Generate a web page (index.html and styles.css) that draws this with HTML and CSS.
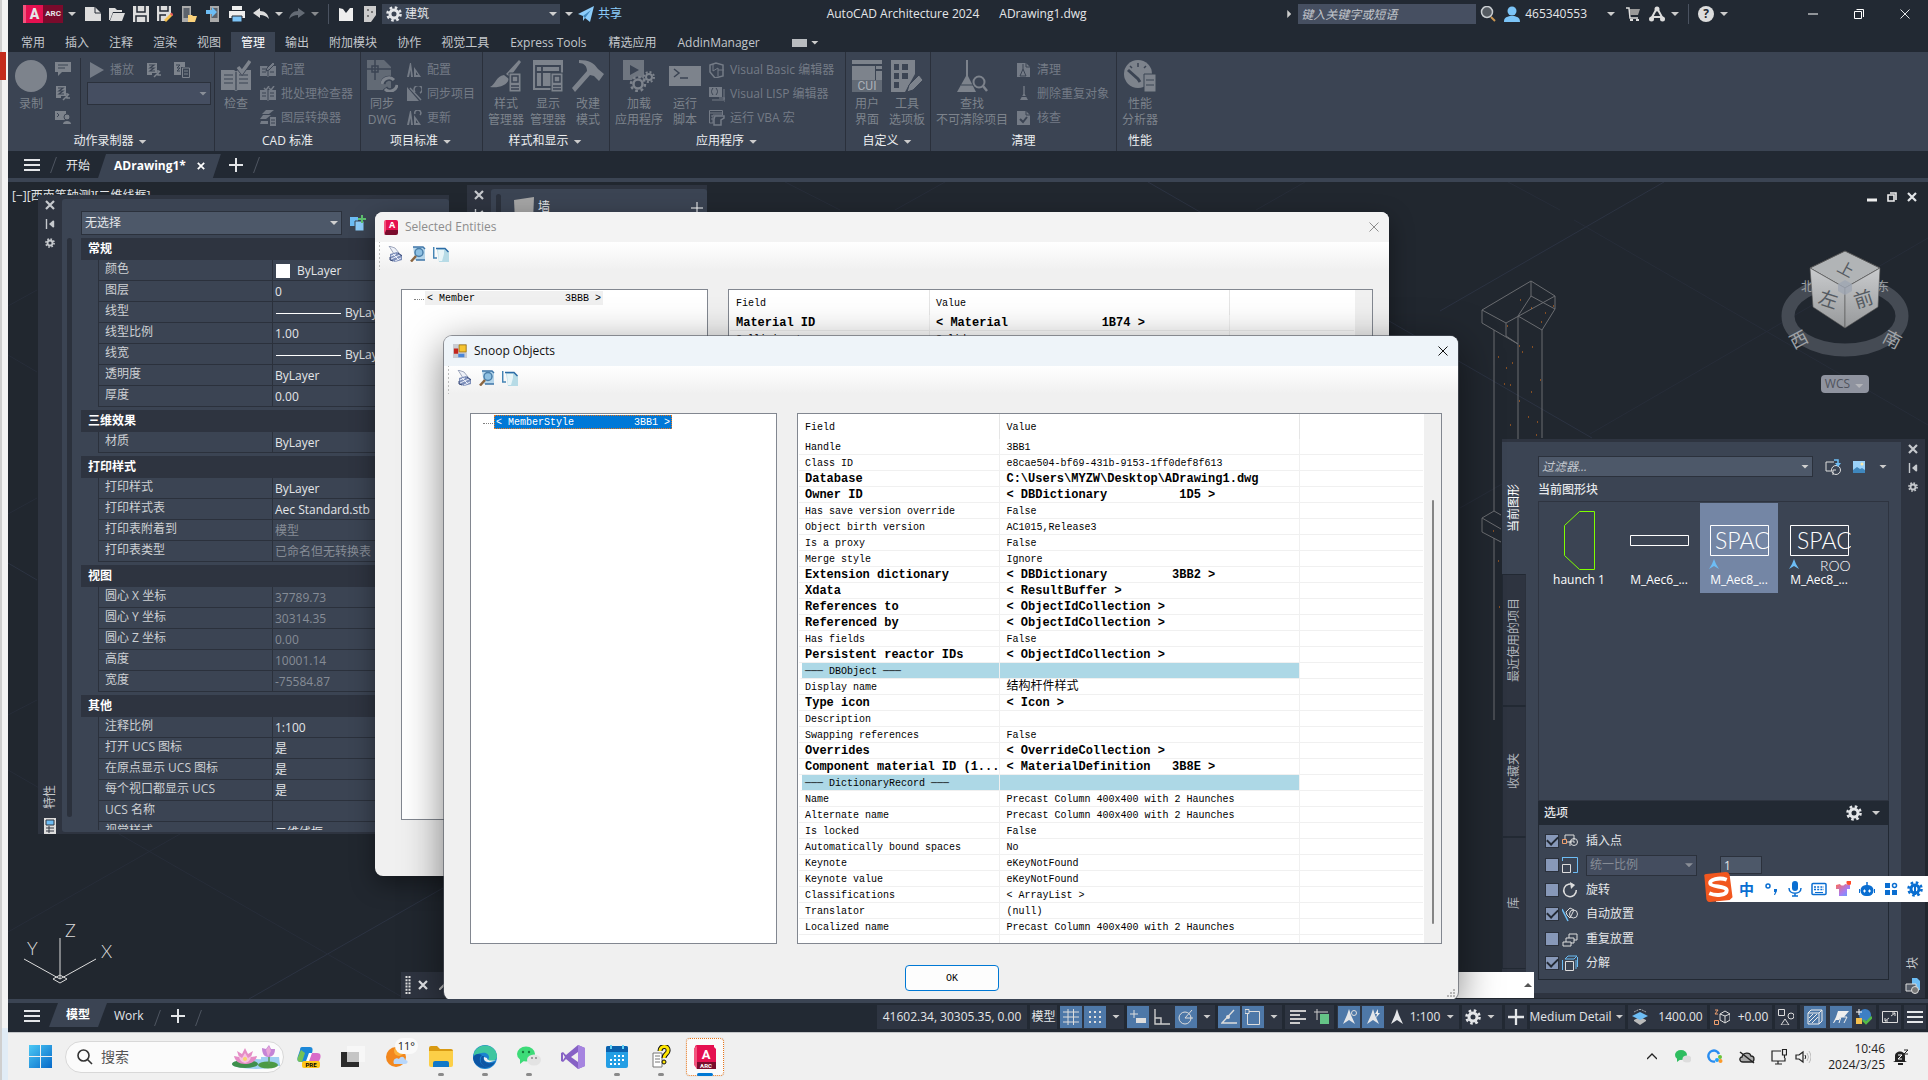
FILE: index.html
```
<!DOCTYPE html>
<html lang="zh-CN">
<head>
    <meta charset="UTF-8">
    <meta name="viewport" content="width=device-width, initial-scale=1.0">
    <title>AutoCAD Architecture 2024 - ADrawing1.dwg</title>
    <link rel="stylesheet" href="styles.css">
</head>
<body>
    <!-- Shared icons -->
    <svg class="sprite" aria-hidden="true">
        <symbol id="i-gear" viewBox="0 0 16 16"><g fill="none" stroke="currentColor"><circle cx="8" cy="8" r="4" stroke-width="3"/><circle cx="8" cy="8" r="6.5" stroke-width="2.6" stroke-dasharray="2.55 2.55"/></g></symbol>
        <symbol id="i-close" viewBox="0 0 10 10"><path d="M1 1L9 9M9 1L1 9" stroke="currentColor" stroke-width="2.2"/></symbol>
        <symbol id="i-thin-close" viewBox="0 0 10 10"><path d="M.5 .5L9.5 9.5M9.5 .5L.5 9.5" stroke="currentColor" stroke-width="1"/></symbol>
        <symbol id="i-pin" viewBox="0 0 10 10"><path d="M1.500 0V10M8.500 2V8" stroke="currentColor" stroke-width="1.4"/><path d="M8.500 1V9L4 5z" fill="currentColor"/></symbol>
        <symbol id="i-menu" viewBox="0 0 16 12"><path d="M0 1H16M0 6H16M0 11H16" stroke="currentColor" stroke-width="2"/></symbol>
        <symbol id="i-plus" viewBox="0 0 14 14"><path d="M7 0V14M0 7H14" stroke="currentColor" stroke-width="2"/></symbol>
        <symbol id="i-book" viewBox="0 0 30 32"><path d="M0 10H13L15 11.500L17 10H30V30H17L15 31L13 30H0z" fill="currentColor"/><path d="M15 12V30M3 15H12M3 19H12M3 23H12M18 15H27M18 19H27M18 23H27" stroke="#3b4453" stroke-width="1.2"/><path d="M17 7L21 12L29 1" fill="none" stroke="#3b4453" stroke-width="5"/><path d="M17 7L21 12L29 1" fill="none" stroke="currentColor" stroke-width="3.500"/></symbol>
        <symbol id="i-scroll" viewBox="0 0 16 16"><path d="M1 1H11V11H6V13H1z" fill="currentColor"/><path d="M3 3H8L4 6H8L4 9H9" fill="none" stroke="#3b4453" stroke-width="1.2"/><path d="M8 15L14 9M12 8V13H15" fill="none" stroke="currentColor" stroke-width="1.500"/></symbol>
        <symbol id="i-compass" viewBox="0 0 16 16"><path d="M4 1H5L7 15H5L4.500 8L3 15H1z" fill="currentColor"/><path d="M8 5L15 15H8z" fill="currentColor"/><path d="M10 10L12 13H10z" fill="#3b4453"/></symbol>
        <symbol id="i-page" viewBox="0 0 16 16"><path d="M1 1H10L14 5V15H1z" fill="currentColor"/><path d="M10 1V5H14" fill="none" stroke="#3b4453"/></symbol>
        <symbol id="i-broom" viewBox="0 0 16 16"><path d="M7.300 0H8.700V8L12 14H4L7.300 8z" fill="currentColor"/><path d="M5 10.500H11" stroke="#3b4453"/></symbol>
        <symbol id="i-nav" viewBox="0 0 16 16"><path d="M8 0L10 6L14 15L8 11L2 15L6 6z" fill="currentColor"/></symbol>
        <symbol id="i-print" viewBox="0 0 16 16"><path d="M2 0L8 2L12 7L7 8z" fill="#eef1f8" stroke="#7b87a3" stroke-width=".7"/><path d="M3 8L10 6L15 9V14L8 16L3 14z" fill="#7f90ba"/><path d="M4 10L9 8M4 13L13 9M8 15L14 12M6 8L12 14" stroke="#e9eefa"/><path d="M3 11V14L6 15M11 7L15 10" fill="none" stroke="#3a4b78"/></symbol>
        <symbol id="i-preview" viewBox="0 0 16 16"><path d="M3 1H13L15 3V14H5z" fill="#b5d5ea"/><path d="M3 1H13L15 3M15 14H6" fill="none" stroke="#3f76a8" stroke-width="1.500"/><circle cx="9" cy="6.500" r="4" fill="#8ec0e2" stroke="#4b7faa" stroke-width="1.500"/><path d="M6 10L1 15.500" stroke="#8a6540" stroke-width="2.500"/></symbol>
        <symbol id="i-copy" viewBox="0 0 16 16"><path d="M.7 1V12H4" fill="none" stroke="#4585b5" stroke-width="1.500"/><path d="M4 3H12L16 6V16H6z" fill="#b7dbe6"/><path d="M5 4H11V8L9 15H6z" fill="#e8f5f8"/><path d="M3 2.500H12L15.500 6" fill="none" stroke="#2c6ca6" stroke-width="1.500"/></symbol>
    </svg>

    <div class="desktop">
        <div class="behind"><span class="behind-red"></span></div>

        <div class="app">
            <header class="titlebar">
                <div class="title-left">
                    <button class="app-logo" aria-label="ACA"><b>A</b><span>ARC</span></button>
                    <i class="caret wide"></i>
                    <button class="tool"><svg viewBox="0 0 16 16"><path d="M0 1H10L16 7V15H0z" fill="#ddd"/><path d="M10 1V7H16" fill="none" stroke="#222933"/></svg></button>
                    <button class="tool"><svg viewBox="0 0 16 16"><path d="M0 2H6L8 4H13V6H4L1 14H0z" fill="#ddd"/><path d="M4 7H16L13 15H1z" fill="#ddd"/></svg></button>
                    <button class="tool"><svg viewBox="0 0 16 16"><path d="M0 0H16V16H0z" fill="#ddd"/><path d="M4 0V6H12V0M3 16V10H13V16" fill="none" stroke="#222933" stroke-width="1.500"/></svg></button>
                    <button class="tool"><svg viewBox="0 0 16 16"><path d="M0 0H14V8L8 15H0z" fill="#ddd"/><path d="M3 0V5H11V0M3 15V9H9" fill="none" stroke="#222933" stroke-width="1.500"/><path d="M7 14L14 7L16 9L9 16z" fill="#f4c04e"/><path d="M13 8L14.500 6.500L16.500 8.500L15 10z" fill="#e2565b"/></svg></button>
                    <button class="tool"><svg viewBox="0 0 16 16"><path d="M1 0H10V16H1z" fill="#aaa"/><path d="M2.500 2H8.500V12H2.500z" fill="#5d636c"/><path d="M7 9H11L12 10H16L14 16H7z" fill="#fbd27b"/></svg></button>
                    <button class="tool"><svg viewBox="0 0 16 16"><path d="M5 0H14V16H5z" fill="#aaa"/><path d="M6.500 2H12.500V12H6.500z" fill="#5d636c"/><path d="M1 4H7V1L12 6L7 11V8H1z" fill="#6dbdf5"/></svg></button>
                    <button class="tool"><svg viewBox="0 0 16 16"><path d="M3 0H13V4H3zM0 5H16V12H0z" fill="#eee"/><path d="M3 10H13V16H3z" fill="#7cc4f7" stroke="#222933"/></svg></button>
                    <button class="tool"><svg viewBox="0 0 16 16"><path d="M0 7L7 2V5C12 5 15 8 16 13C13 10 11 9 7 9V12z" fill="#ddd"/></svg></button>
                    <i class="caret"></i>
                    <button class="tool dim"><svg viewBox="0 0 16 16"><path d="M16 7L9 2V5C4 5 1 8 0 13C3 10 5 9 9 9V12z" fill="#646b75"/></svg></button>
                    <i class="caret dim"></i>
                    <span class="rule"></span>
                    <button class="tool"><svg viewBox="0 0 16 16"><path d="M1 2L5 3L8 7L12 2H15V15H1z" fill="#eee"/></svg></button>
                    <button class="tool"><svg viewBox="0 0 16 16"><path d="M2 0H14V9L9 16H2z" fill="#ccc"/><path d="M5 3H7V5H5zM9 5H11V7H9zM5 9H7V11H5z" fill="#777"/></svg></button>
                    <label class="combo workspace"><svg viewBox="0 0 16 16"><use href="#i-gear"/></svg><select aria-label="工作空间"><option>建筑</option></select></label>
                    <i class="caret wide"></i>
                    <button class="share"><svg viewBox="0 0 16 16"><path d="M16 0L12 16L7 12L5 15V10L0 8z" fill="#8ccdfb"/><path d="M5 10L13 4L7 12" fill="#3f87bd"/></svg>共享</button>
                </div>
                <div class="title-text"><span>AutoCAD Architecture 2024</span><span>ADrawing1.dwg</span></div>
                <div class="title-right">
                    <i class="caret side"></i>
                    <input class="search-box" type="search" placeholder="键入关键字或短语" aria-label="搜索">
                    <button class="tool"><svg viewBox="0 0 16 16"><circle cx="7" cy="6" r="5.500" fill="#555b62" stroke="#c9cdd1" stroke-width="1.500"/><path d="M11 11L15 15" stroke="#c99550" stroke-width="2"/></svg></button>
                    <button class="account"><svg viewBox="0 0 16 16"><circle cx="8" cy="5" r="4.500" fill="#7cc4f7"/><path d="M0 16C0 11 3 11 6 10H10C13 11 16 11 16 16z" fill="#7cc4f7"/></svg>465340553</button>
                    <i class="caret"></i>
                    <button class="tool cart"><svg viewBox="0 0 16 16"><path d="M1 2H4L5 12H13" fill="none" stroke="#ddd" stroke-width="1.500"/><path d="M5 3H15L13 9H5z" fill="#999"/><path d="M5 13H8V15H5zM11 13H14V15H11z" fill="#ddd"/></svg></button>
                    <button class="tool"><svg viewBox="0 0 16 16"><path d="M8 2L2 13M8 2L14 13M4 11H12" fill="none" stroke="#ddd" stroke-width="2"/><circle cx="8" cy="3" r="2.500" fill="#ddd"/><circle cx="2.500" cy="13" r="2.500" fill="#ddd"/><circle cx="13.500" cy="13" r="2.500" fill="#ddd"/></svg></button>
                    <i class="caret"></i>
                    <span class="rule"></span>
                    <button class="help">?</button>
                    <i class="caret"></i>
                    <div class="window-controls">
                        <button aria-label="最小化"><svg viewBox="0 0 10 10"><path d="M0 5H10" stroke="#fff"/></svg></button>
                        <button aria-label="还原"><svg viewBox="0 0 10 10"><path d="M.5 2.500H7.500V9.500H.5zM2.500 .5H9.500V8" fill="none" stroke="#fff"/></svg></button>
                        <button aria-label="关闭"><svg viewBox="0 0 10 10"><use href="#i-thin-close"/></svg></button>
                    </div>
                </div>
            </header>

            <nav class="ribbon-tabs">
                <button>常用</button><button>插入</button><button>注释</button><button>渲染</button><button>视图</button><button class="active">管理</button><button>输出</button><button>附加模块</button><button>协作</button><button>视觉工具</button><button class="latin">Express Tools</button><button>精选应用</button><button class="latin">AddinManager</button>
                <button class="ribbon-toggle" aria-label="最小化功能区"><span></span><i class="caret"></i></button>
            </nav>

            <section class="ribbon">
                <div class="panel panel-recorder">
                    <div class="panel-body">
                        <button class="big" disabled><svg viewBox="0 0 32 32"><circle cx="16" cy="16" r="16" fill="currentColor"/></svg>录制</button>
                        <div class="icon-stack">
                            <svg viewBox="0 0 16 16"><path d="M0 1H16V11H7L3 15V11H0z" fill="currentColor"/><path d="M3 4H13M3 7H10" stroke="#3b4453"/></svg>
                            <svg viewBox="0 0 16 16"><use href="#i-scroll"/></svg>
                            <svg viewBox="0 0 16 16"><path d="M0 2H11V11H0z" fill="currentColor"/><path d="M2 4L4 6L2 8" stroke="#3b4453" fill="none"/><circle cx="12" cy="8" r="3" fill="currentColor" stroke="#3b4453"/><path d="M8 15C8 11 16 11 16 15z" fill="currentColor"/></svg>
                        </div>
                        <div class="play-group">
                            <div class="play-row">
                                <button class="small" disabled><svg viewBox="0 0 16 16"><path d="M1 0L15 8L1 16z" fill="currentColor"/></svg>播放</button>
                                <svg viewBox="0 0 16 16"><use href="#i-scroll"/></svg>
                                <svg viewBox="0 0 16 16"><path d="M0 0H11V5H7V13H0z" fill="currentColor"/><path d="M2 3H6L3 6H6L3 9H6" fill="none" stroke="#3b4453"/><path d="M8.500 6H15.500V15.500H8.500zM10 9H14M10 12H14" fill="none" stroke="currentColor"/></svg>
                            </div>
                            <span class="combo macro"><select disabled aria-label="动作宏"><option></option></select></span>
                        </div>
                    </div>
                    <div class="panel-title">动作录制器 <i class="caret"></i></div>
                </div>
                <div class="panel panel-cad">
                    <div class="panel-body">
                        <button class="big" disabled><svg viewBox="0 0 30 32"><use href="#i-book"/></svg>检查</button>
                        <div class="small-stack">
                            <button class="small" disabled><svg viewBox="0 0 16 16"><path d="M0 4H7L8 5L9 4H16V14H9L8 15L7 14H0z" fill="currentColor"/><path d="M8 5V14M2 7H6M2 10H6M10 10H14" stroke="#3b4453"/><path d="M6 9L7 6L13 0L15 2L9 8z" fill="currentColor" stroke="#3b4453"/></svg>配置</button>
                            <button class="small" disabled><svg viewBox="0 0 16 16"><path d="M0 4H7L8 5L9 4H16V14H9L8 15L7 14H0z" fill="currentColor"/><path d="M8 5V14M2 7H6M2 10H6M10 7H14M10 10H14" stroke="#3b4453"/><path d="M4 2L6 4L9 0M9 2L11 4L14 0" fill="none" stroke="currentColor" stroke-width="1.500"/></svg>批处理检查器</button>
                            <button class="small" disabled><svg viewBox="0 0 16 16"><path d="M6 0H14L9 4H2zM3 5H11L6 9H0zM1 11H8V14H0z" fill="currentColor"/><path d="M10 7H16V16H10z" fill="currentColor"/><path d="M11 10H15M11 13H15" stroke="#3b4453"/></svg>图层转换器</button>
                        </div>
                    </div>
                    <div class="panel-title">CAD 标准</div>
                </div>
                <div class="panel panel-project">
                    <div class="panel-body">
                        <button class="big" disabled><svg viewBox="0 0 32 32"><path d="M1 0H18L25 7V30H1z" fill="currentColor" opacity=".6"/><path d="M1 9H25M9 0V20M6 6H12V12H6z" fill="none" stroke="#3b4453" stroke-width="1.500"/><path d="M17 24A6 6 0 0 1 28 21M30 25A6 6 0 0 1 19 28" fill="none" stroke="#3b4453" stroke-width="5"/><path d="M16 24A7 7 0 0 1 28 20M31 25A7 7 0 0 1 19 29" fill="none" stroke="currentColor" stroke-width="3"/></svg>同步<br>DWG</button>
                        <div class="small-stack">
                            <button class="small" disabled><svg viewBox="0 0 16 16"><use href="#i-compass"/></svg>配置</button>
                            <button class="small" disabled><svg viewBox="0 0 16 16"><path d="M1 1L13 15H1z" fill="currentColor"/><path d="M9 6A4 4 0 1 1 14 7M4 2L15 14" fill="none" stroke="currentColor" stroke-width="1.500"/></svg>同步项目</button>
                            <button class="small" disabled><svg viewBox="0 0 16 16"><use href="#i-compass"/><path d="M9 4A3 3 0 1 1 14 5" fill="none" stroke="currentColor" stroke-width="1.500"/></svg>更新</button>
                        </div>
                    </div>
                    <div class="panel-title">项目标准 <i class="caret"></i></div>
                </div>
                <div class="panel panel-style">
                    <div class="panel-body">
                        <button class="big" disabled><svg viewBox="0 0 32 32"><path d="M29 0L31 2L20 17L16 14z" fill="currentColor"/><path d="M14 15L19 19C17 26 8 28 0 27C6 24 6 16 14 15z" fill="currentColor"/><path d="M19 13H31V32H19z" fill="currentColor" stroke="#3b4453"/><path d="M22 16H28V22H22zM21 26H29M21 29H29" fill="none" stroke="#3b4453" stroke-width="1.500"/></svg>样式<br>管理器</button>
                        <button class="big" disabled><svg viewBox="0 0 32 32"><path d="M1 0H31V30H1z" fill="currentColor"/><path d="M4 6H28V27H4zM10 6V27M4 12H28" fill="none" stroke="#3b4453" stroke-width="1.800"/><path d="M19 13H31V32H19z" fill="currentColor" stroke="#3b4453"/><path d="M22 16H28V22H22zM21 26H29M21 29H29" fill="none" stroke="#3b4453" stroke-width="1.500"/></svg>显示<br>管理器</button>
                        <button class="big" disabled><svg viewBox="0 0 32 32"><path d="M7 0C17 0 22 3 26 9L32 14L27 21L22 16L18 15L3 32L0 28L15 11C15 6 12 3 7 3z" fill="currentColor"/></svg>改建<br>模式</button>
                    </div>
                    <div class="panel-title">样式和显示 <i class="caret"></i></div>
                </div>
                <div class="panel panel-apps">
                    <div class="panel-body">
                        <button class="big" disabled><svg viewBox="0 0 32 32"><path d="M0 0H21V20H0z" fill="currentColor" opacity=".8"/><path d="M7 5L16 10L7 15z" fill="#3b4453"/><circle cx="15" cy="24" r="7.500" fill="#3b4453"/><g fill="none" stroke="currentColor"><circle cx="15" cy="24" r="4.500" stroke-width="2.500"/><circle cx="15" cy="24" r="7" stroke-width="2.500" stroke-dasharray="2.750 2.750"/><circle cx="26" cy="17" r="3" stroke-width="2"/><circle cx="26" cy="17" r="5" stroke-width="2" stroke-dasharray="1.960 1.960"/></g></svg>加载<br>应用程序</button>
                        <button class="big" disabled><svg viewBox="0 0 32 32"><path d="M0 6H32V26H0z" fill="currentColor"/><path d="M5 9L10 13L5 17M11 18H19" fill="none" stroke="#3b4453" stroke-width="1.500"/></svg>运行<br>脚本</button>
                        <div class="small-stack">
                            <button class="small" disabled><svg viewBox="0 0 16 16"><path d="M1 3L7 1L14 3V14L6 16L1 10z" fill="none" stroke="currentColor" stroke-width="1.500"/><path d="M4 2V9L9 6V14M9 8H15" stroke="currentColor" fill="none"/></svg>Visual Basic 编辑器</button>
                            <button class="small" disabled><svg viewBox="0 0 16 16"><path d="M0 1H13V11H0z" fill="currentColor"/><path d="M4 2C2 5 2 6 4 9M7 2C9 5 9 6 7 9" fill="none" stroke="#3b4453"/><path d="M15 3V14H3M10 12H16V16" fill="none" stroke="currentColor"/></svg>Visual LISP 编辑器</button>
                            <button class="small" disabled><svg viewBox="0 0 16 16"><path d="M.5 .5H13.500V5H4V13H.5zM.5 3H13M2 6H4M2 9H4" fill="none" stroke="currentColor"/><path d="M6 6H15V8L12 10V15H5V9z" fill="none" stroke="currentColor" stroke-width="1.500"/></svg>运行 VBA 宏</button>
                        </div>
                    </div>
                    <div class="panel-title">应用程序 <i class="caret"></i></div>
                </div>
                <div class="panel panel-custom">
                    <div class="panel-body">
                        <button class="big" disabled><svg viewBox="0 0 32 32"><path d="M1 0H31V4H1zM1 6H24V20H1zM25 6H31V9H25zM25 11H31V20H25z" fill="currentColor"/><path d="M1 20H31V32H1z" fill="currentColor" opacity=".6"/><text x="16" y="30" text-anchor="middle" class="cui-text">CUI</text></svg>用户<br>界面</button>
                        <button class="big" disabled><svg viewBox="0 0 32 32"><path d="M0 0H24V14L14 32H0z" fill="currentColor"/><path d="M3 4H8V10H3zM11 4H17V10H11zM3 13H8V19H3zM11 13H17V19H11zM3 22H8V28H3z" fill="#3b4453"/><path d="M16 32L18 25L28 15L32 20L22 30z" fill="currentColor" stroke="#3b4453"/></svg>工具<br>选项板</button>
                    </div>
                    <div class="panel-title">自定义 <i class="caret"></i></div>
                </div>
                <div class="panel panel-purge">
                    <div class="panel-body">
                        <button class="big" disabled><svg viewBox="0 0 32 32"><path d="M10 0H12V16L20 32H1L10 16z" fill="currentColor"/><path d="M5 25H17" stroke="#3b4453"/><circle cx="23" cy="22" r="5.500" fill="#3b4453" stroke="currentColor" stroke-width="2"/><path d="M27 26L31 31" stroke="currentColor" stroke-width="2.500"/></svg>查找<br>不可清除项目</button>
                        <div class="small-stack">
                            <button class="small" disabled><svg viewBox="0 0 16 16"><use href="#i-page"/><path d="M7 2V7L4 14H10L7 7" fill="none" stroke="#3b4453"/></svg>清理</button>
                            <button class="small" disabled><svg viewBox="0 0 16 16"><use href="#i-broom"/></svg>删除重复对象</button>
                            <button class="small" disabled><svg viewBox="0 0 16 16"><use href="#i-page"/><path d="M4 9L7 12L11 7" fill="none" stroke="#3b4453" stroke-width="2"/></svg>核查</button>
                        </div>
                    </div>
                    <div class="panel-title">清理</div>
                </div>
                <div class="panel panel-perf">
                    <div class="panel-body">
                        <button class="big" disabled><svg viewBox="0 0 32 32"><circle cx="14" cy="14" r="14" fill="currentColor"/><path d="M4 10L14 19L16 22" stroke="#3b4453" stroke-width="3" fill="none"/><path d="M14 3V7M6 6L8 8M22 6L20 8" stroke="#3b4453" stroke-width="1.500"/><path d="M20 14H32V32H20z" fill="currentColor" stroke="#3b4453"/><path d="M22 20H30M22 25H30" stroke="#3b4453"/></svg>性能<br>分析器</button>
                    </div>
                    <div class="panel-title">性能</div>
                </div>
            </section>

            <nav class="file-tabs">
                <button class="menu" aria-label="菜单"><svg viewBox="0 0 16 12"><use href="#i-menu"/></svg></button>
                <span class="slash"></span>
                <button class="start">开始</button>
                <button class="file-active">ADrawing1* <svg viewBox="0 0 10 10"><use href="#i-close"/></svg></button>
                <button class="plus" aria-label="新建"><svg viewBox="0 0 14 14"><use href="#i-plus"/></svg></button>
                <span class="slash"></span>
            </nav>

            <main class="canvas">
                <svg class="scene" viewBox="8 182 1920 817" preserveAspectRatio="xMinYMin meet">
                    <g stroke="#2c3342" fill="none">
                        <path d="M1664 182L1440 311M1148 182L1592 438M443 888L249 999M8 563L37 580"/>
                        <path stroke="#272d39" d="M1574 220L1928 425M1928 238L1590 434M180 834L8 932M8 770L402 997M8 715L37 700M8 306L37 290M8 355L37 372M8 514L37 498M785 182L840 210M945 182L895 210M1305 182L1256 210M1508 182L1560 210M1460 508L1502 484"/>
                    </g>
                    <!-- Column wireframe -->
                    <g stroke="#6a6c70" fill="none">
                        <path d="M1482 310L1531 281L1555 296V309L1542 330L1518 316L1531 296V281M1482 310L1506 323V336L1518 344L1482 323zM1506 323L1555 296M1531 296L1555 309"/>
                        <path d="M1494 330V511M1518 316V442M1542 330V438M1494 511L1482 518V532L1501 542M1482 518L1501 529M1494 511L1501 515M1494 538V720"/>
                    </g>
                    <path d="M1520 300h1M1531 308h1M1545 313h1M1553 306h1M1541 322h1M1507 326h1M1519 346h1M1532 347h1M1522 352h1M1498 357h1M1512 363h1M1506 368h1M1504 384h1M1510 385h1M1540 380h1M1531 392h1M1519 401h1M1528 417h1M1537 422h1M1510 425h1M1536 435h1M1493 531h1M1498 561h1M1499 607h1" stroke="#e8761a"/>
                    <!-- UCS axes -->
                    <g stroke="#dcdcdc" fill="none"><path d="M60 938V979L24 959M60 979L96 959M53 979L60 975L67 979L60 983z"/></g>
                    <g class="axis-text"><text x="27" y="955">Y</text><text x="65" y="937">Z</text><text x="101" y="958">X</text></g>
                </svg>

                <!-- View cube -->
                <div class="viewcube">
                    <svg viewBox="1780 245 130 120">
                        <defs><linearGradient id="cube" x2="0" y2="1"><stop stop-color="#c9cbcd"/><stop offset="1" stop-color="#97999b"/></linearGradient></defs>
                        <ellipse cx="1845" cy="316" rx="57" ry="34" fill="none" stroke="#454b54" stroke-width="13"/>
                        <g class="compass-text"><text x="1801" y="291">北</text><text x="1877" y="291">东</text><text class="near" x="1790" y="346" transform="rotate(-28 1799 340)">西</text><text class="near" x="1883" y="346" transform="rotate(28 1892 340)">南</text></g>
                        <path d="M1845 251L1880 268L1845 288L1810 268z" fill="#b1b4b6" stroke="#555"/>
                        <path d="M1810 268L1845 288V328L1813 307z" fill="url(#cube)" stroke="#555" stroke-width=".6"/>
                        <path d="M1880 268L1845 288V328L1878 307z" fill="url(#cube)" stroke="#555" stroke-width=".6"/>
                        <path d="M1838 284L1845 280L1852 284V291L1845 295L1838 291z" fill="#9fa6b3" opacity=".8"/>
                        <g class="cube-text"><text x="1838" y="275" transform="rotate(28 1846 269)">上</text><text x="1819" y="306" transform="rotate(18 1828 299)" class="face">左</text><text x="1854" y="306" transform="rotate(-18 1863 299)" class="face">前</text></g>
                    </svg>
                    <button class="wcs">WCS <i class="caret"></i></button>
                </div>
                <div class="doc-controls">
                    <svg viewBox="0 0 10 10"><path d="M0 8H10" stroke="#eee" stroke-width="3"/></svg>
                    <svg viewBox="0 0 10 10"><path d="M1 3H7V9H1zM3 1H9V8" fill="none" stroke="#eee" stroke-width="1.600"/></svg>
                    <svg viewBox="0 0 10 10"><use href="#i-close"/></svg>
                </div>
                <div class="view-label">[−][西南等轴测][二维线框]</div>

                <!-- Properties palette -->
                <aside class="palette properties">
                    <div class="palette-bar">
                        <svg viewBox="0 0 10 10"><use href="#i-close"/></svg>
                        <svg viewBox="0 0 10 10"><use href="#i-pin"/></svg>
                        <svg viewBox="0 0 16 16"><use href="#i-gear"/></svg>
                        <span class="vertical">特性</span>
                        <svg class="palette-icon" viewBox="0 0 12 16"><path d="M0 0H12V16H0z" fill="#ddd"/><path d="M2 2H10V7H2z" fill="#6dbdf5" stroke="#2e3440"/><path d="M2 10H10M2 13H10M5 8V15" stroke="#2e3440"/></svg>
                    </div>
                    <div class="palette-body">
                        <span class="track"></span>
                        <div class="props">
                            <div class="props-head">
                                <span class="combo selection"><select aria-label="对象"><option>无选择</option></select></span>
                                <svg viewBox="0 0 16 16"><path d="M0 2H8V11H0z" fill="#6dbdf5"/><path d="M5 6H14V16H5z" fill="#8ccdfb" stroke="#3b4453"/><path d="M12 0V8M8 4H16" stroke="#5ec26f" stroke-width="2"/></svg>
                            </div>
                            <h3>常规</h3>
                            <table>
                                <tr><th>颜色</th><td><span class="swatch"></span>ByLayer</td></tr>
                                <tr><th>图层</th><td>0</td></tr>
                                <tr><th>线型</th><td><span class="line"></span>ByLayer</td></tr>
                                <tr><th>线型比例</th><td>1.00</td></tr>
                                <tr><th>线宽</th><td><span class="line"></span>ByLayer</td></tr>
                                <tr><th>透明度</th><td>ByLayer</td></tr>
                                <tr><th>厚度</th><td>0.00</td></tr>
                            </table>
                            <h3>三维效果</h3>
                            <table>
                                <tr><th>材质</th><td>ByLayer</td></tr>
                            </table>
                            <h3>打印样式</h3>
                            <table>
                                <tr><th>打印样式</th><td>ByLayer</td></tr>
                                <tr><th>打印样式表</th><td>Aec Standard.stb</td></tr>
                                <tr><th>打印表附着到</th><td class="off">模型</td></tr>
                                <tr><th>打印表类型</th><td class="off">已命名但无转换表</td></tr>
                            </table>
                            <h3>视图</h3>
                            <table>
                                <tr><th>圆心 X 坐标</th><td class="off">37789.73</td></tr>
                                <tr><th>圆心 Y 坐标</th><td class="off">30314.35</td></tr>
                                <tr><th>圆心 Z 坐标</th><td class="off">0.00</td></tr>
                                <tr><th>高度</th><td class="off">10001.14</td></tr>
                                <tr><th>宽度</th><td class="off">-75584.87</td></tr>
                            </table>
                            <h3>其他</h3>
                            <table>
                                <tr><th>注释比例</th><td>1:100</td></tr>
                                <tr><th>打开 UCS 图标</th><td>是</td></tr>
                                <tr><th>在原点显示 UCS 图标</th><td>是</td></tr>
                                <tr><th>每个视口都显示 UCS</th><td>是</td></tr>
                                <tr><th>UCS 名称</th><td></td></tr>
                                <tr><th>视觉样式</th><td>二维线框</td></tr>
                            </table>
                        </div>
                    </div>
                </aside>

                <!-- Tool palette -->
                <aside class="palette tools">
                    <div class="palette-bar">
                        <svg viewBox="0 0 10 10"><use href="#i-close"/></svg>
                        <svg viewBox="0 0 10 10"><use href="#i-pin"/></svg>
                    </div>
                    <div class="palette-body">
                        <span class="track"></span>
                        <div class="tool-item">
                            <svg viewBox="0 0 20 24"><path d="M0 3L20 0L19 24H1z" fill="#a5a5a5"/></svg><span>墙</span>
                            <svg class="cross" viewBox="0 0 12 12"><path d="M6 0V12M0 6H12" stroke="#fff"/></svg>
                        </div>
                    </div>
                </aside>

                <!-- Blocks palette -->
                <aside class="palette blocks">
                    <div class="block-tabs">
                        <button class="active"><span class="vertical">当前图形</span></button>
                        <button><span class="vertical">最近使用的项目</span></button>
                        <button><span class="vertical">收藏夹</span></button>
                        <button><span class="vertical">库</span></button>
                    </div>
                    <div class="block-body">
                        <div class="filter-row">
                            <span class="combo filter"><input type="text" placeholder="过滤器..." aria-label="过滤器"></span>
                            <svg viewBox="0 0 16 16"><path d="M9 3H1V12H6" fill="none" stroke="#ddd"/><circle cx="11" cy="11" r="4.500" fill="none" stroke="#ddd"/><path d="M8 16V11H11" fill="none" stroke="#ddd"/><path d="M9 1H13V5" fill="none" stroke="#6dbdf5" stroke-width="1.500"/><path d="M10 4H16L13 8z" fill="#6dbdf5"/></svg>
                            <svg viewBox="0 0 12 12"><path d="M0 0H12V12H0z" fill="#9ad2fa"/><circle cx="9" cy="3" r="1.500" fill="#fbe9a8"/><path d="M0 9L4 6L7 8L9 7L12 9V12H0z" fill="#3f87bd"/></svg>
                            <i class="caret"></i>
                        </div>
                        <h4>当前图形块</h4>
                        <div class="block-list">
                            <figure><svg viewBox="0 0 78 72"><path d="M39.500 8.500H54.500V66.500H39.500L24.500 52.500V22.500z" fill="none" stroke="#7fff00"/></svg><figcaption>haunch 1</figcaption></figure>
                            <figure><svg viewBox="0 0 78 72"><path d="M10.500 32.500H68.500V42.500H10.500z" fill="none" stroke="#fff"/></svg><figcaption>M_Aec6_...</figcaption></figure>
                            <figure class="selected"><svg viewBox="0 0 78 72"><path d="M10.500 22.500H68.500V52.500H10.500z" fill="none" stroke="#fff"/><svg width="61" height="72" x="10" y="0"><text class="cad-text" x="5" y="46">SPACE</text></svg><path d="M14 56L16 61L19 66L14 63L9 66L12 61z" fill="#6dbdf5"/></svg><figcaption>M_Aec8_...</figcaption></figure>
                            <figure><svg viewBox="0 0 78 72"><path d="M10.500 22.500H68.500V52.500H10.500z" fill="none" stroke="#fff"/><svg width="61" height="72" x="10" y="0"><text class="cad-text" x="7" y="46">SPACE</text><text class="cad-text cad-small" x="30" y="68">ROOM</text></svg><path d="M14 56L16 61L19 66L14 63L9 66L12 61z" fill="#6dbdf5"/></svg><figcaption>M_Aec8_...</figcaption></figure>
                        </div>
                        <div class="options-head">选项<svg viewBox="0 0 16 16"><use href="#i-gear"/></svg><i class="caret"></i></div>
                        <div class="options">
                            <label><input type="checkbox" checked><svg viewBox="0 0 16 16"><path d="M.5 6.500H4.500V10.500H.5z" fill="none" stroke="#f2a16f"/><path d="M3 6V2H12V7M5 9H10" fill="none" stroke="#ddd"/><circle cx="12" cy="9" r="3.500" fill="none" stroke="#ddd"/><path d="M8 13V8H12V10" fill="none" stroke="#ddd"/></svg>插入点</label>
                            <div class="option-row">
                                <input type="checkbox" aria-label="比例"><svg viewBox="0 0 16 16"><path d="M0 .5H15.500V15.500H11M.5 4V.5" fill="none" stroke="#6dbdf5"/><path d="M.5 7.500H8.500V15.500H.5z" fill="none" stroke="#ddd"/></svg>
                                <span class="combo scale"><select disabled aria-label="比例类型"><option>统一比例</option></select></span>
                                <input class="number" type="text" value="1" aria-label="比例值">
                            </div>
                            <label><input type="checkbox"><svg viewBox="0 0 16 16"><path d="M12 3.500A6.300 6.300 0 1 0 14.300 8" fill="none" stroke="#ddd" stroke-width="1.500"/><path d="M8 0L13 3L9 7z" fill="#ddd"/></svg>旋转</label>
                            <label><input type="checkbox" checked><svg viewBox="0 0 16 16"><path d="M0 3L6 15" stroke="#6dbdf5" stroke-width="1.500"/><path d="M4 6L8 2L12 4L8 12L5 9z" fill="none" stroke="#ddd"/><circle cx="11.500" cy="8" r="4" fill="none" stroke="#ddd"/></svg>自动放置</label>
                            <label><input type="checkbox"><svg viewBox="0 0 16 16"><path d="M1 11H9V15H1zM4 11V7H12V12H9M7 7V3H15V9H12" fill="none" stroke="#ddd"/></svg>重复放置</label>
                            <label><input type="checkbox" checked><svg viewBox="0 0 16 16"><path d="M3.500 6.500H11.500V15.500H3.500z" fill="none" stroke="#ddd"/><path d="M.5 15V5M3 4L6 1H15L12 4zM14 5V14M15.500 2V12" fill="none" stroke="#6dbdf5"/></svg>分解</label>
                        </div>
                    </div>
                    <div class="palette-bar">
                        <svg viewBox="0 0 10 10"><use href="#i-close"/></svg>
                        <svg viewBox="0 0 10 10"><use href="#i-pin"/></svg>
                        <svg viewBox="0 0 16 16"><use href="#i-gear"/></svg>
                        <span class="vertical">块</span>
                        <svg class="palette-icon" viewBox="0 0 16 16"><path d="M7 0H12L15 3V12H7z" fill="#6dbdf5"/><path d="M1 6H11V13H1z" fill="#555c68" stroke="#ddd"/><circle cx="10" cy="12" r="3.500" fill="#777" stroke="#ddd"/></svg>
                    </div>
                </aside>

                <!-- Command line -->
                <div class="command">
                    <svg viewBox="0 0 6 18"><path d="M1.500 0V18M4.500 0V18" stroke="#ddd" stroke-width="2" stroke-dasharray="2 1.200"/></svg>
                    <svg viewBox="0 0 10 10"><use href="#i-close"/></svg>
                    <svg class="wrench" viewBox="0 0 10 10"><path d="M0 10L6 4" stroke="#bbb" stroke-width="2"/></svg>
                    <div class="command-input"><i class="caret up"></i></div>
                </div>

                <!-- Selected Entities -->
                <section class="dialog selected-entities">
                    <header class="dialog-title">
                        <span class="mini-logo"><b>A</b></span>
                        <h2>Selected Entities</h2>
                        <button aria-label="Close"><svg viewBox="0 0 10 10"><use href="#i-thin-close"/></svg></button>
                    </header>
                    <div class="dialog-tools">
                        <button><svg viewBox="0 0 16 16"><use href="#i-print"/></svg></button>
                        <button><svg viewBox="0 0 16 16"><use href="#i-preview"/></svg></button>
                        <button><svg viewBox="0 0 16 16"><use href="#i-copy"/></svg></button>
                    </div>
                    <div class="dialog-body">
                        <div class="tree"><div class="node">&lt; Member               3BBB &gt;</div></div>
                        <div class="list">
                            <table>
                                <colgroup><col class="c1"><col class="c2"><col></colgroup>
                                <thead><tr><th>Field</th><th>Value</th><th></th></tr></thead>
                                <tbody>
                                    <tr class="strong"><td>Material ID</td><td>&lt; Material             1B74 &gt;</td><td></td></tr>
                                    <tr><td>Collision type</td><td>Solid</td><td></td></tr>
                                </tbody>
                            </table>
                            <div class="scroll"></div>
                        </div>
                    </div>
                </section>

                <!-- Snoop Objects -->
                <section class="dialog snoop">
                    <header class="dialog-title">
                        <svg class="form-icon" viewBox="0 0 16 16"><path d="M0 0H16V16H0z" fill="#c9ccd3"/><path d="M1 5H6V11H1z" fill="#c4261d"/><path d="M7 1H15V9H7z" fill="#f5c431" stroke="#a87c12"/><path d="M6 11H13V15H6z" fill="#4b86d8"/></svg>
                        <h2>Snoop Objects</h2>
                        <button aria-label="Close"><svg viewBox="0 0 10 10"><use href="#i-thin-close"/></svg></button>
                    </header>
                    <div class="dialog-tools">
                        <button><svg viewBox="0 0 16 16"><use href="#i-print"/></svg></button>
                        <button><svg viewBox="0 0 16 16"><use href="#i-preview"/></svg></button>
                        <button><svg viewBox="0 0 16 16"><use href="#i-copy"/></svg></button>
                    </div>
                    <div class="dialog-body">
                        <div class="tree"><div class="node current">&lt; MemberStyle          3BB1 &gt;</div></div>
                        <div class="list">
                            <table>
                                <colgroup><col class="c1"><col class="c2"><col></colgroup>
                                <thead><tr><th>Field</th><th>Value</th><th></th></tr></thead>
                                <tbody>
                                    <tr><td>Handle</td><td>3BB1</td><td></td></tr>
                                    <tr><td>Class ID</td><td>e8cae504-bf69-431b-9153-1ff0def8f613</td><td></td></tr>
                                    <tr class="strong"><td>Database</td><td>C:\Users\MYZW\Desktop\ADrawing1.dwg</td><td></td></tr>
                                    <tr class="strong"><td>Owner ID</td><td>&lt; DBDictionary          1D5 &gt;</td><td></td></tr>
                                    <tr><td>Has save version override</td><td>False</td><td></td></tr>
                                    <tr><td>Object birth version</td><td>AC1015,Release3</td><td></td></tr>
                                    <tr><td>Is a proxy</td><td>False</td><td></td></tr>
                                    <tr><td>Merge style</td><td>Ignore</td><td></td></tr>
                                    <tr class="strong"><td>Extension dictionary</td><td>&lt; DBDictionary         3BB2 &gt;</td><td></td></tr>
                                    <tr class="strong"><td>Xdata</td><td>&lt; ResultBuffer &gt;</td><td></td></tr>
                                    <tr class="strong"><td>References to</td><td>&lt; ObjectIdCollection &gt;</td><td></td></tr>
                                    <tr class="strong"><td>Referenced by</td><td>&lt; ObjectIdCollection &gt;</td><td></td></tr>
                                    <tr><td>Has fields</td><td>False</td><td></td></tr>
                                    <tr class="strong"><td>Persistent reactor IDs</td><td>&lt; ObjectIdCollection &gt;</td><td></td></tr>
                                    <tr class="group"><td>─── DBObject ───</td><td></td><td></td></tr>
                                    <tr><td>Display name</td><td class="cjk">结构杆件样式</td><td></td></tr>
                                    <tr class="strong"><td>Type icon</td><td>&lt; Icon &gt;</td><td></td></tr>
                                    <tr><td>Description</td><td></td><td></td></tr>
                                    <tr><td>Swapping references</td><td>False</td><td></td></tr>
                                    <tr class="strong"><td>Overrides</td><td>&lt; OverrideCollection &gt;</td><td></td></tr>
                                    <tr class="strong"><td>Component material ID (1...</td><td>&lt; MaterialDefinition   3B8E &gt;</td><td></td></tr>
                                    <tr class="group"><td>─── DictionaryRecord ───</td><td></td><td></td></tr>
                                    <tr><td>Name</td><td>Precast Column 400x400 with 2 Haunches</td><td></td></tr>
                                    <tr><td>Alternate name</td><td>Precast Column 400x400 with 2 Haunches</td><td></td></tr>
                                    <tr><td>Is locked</td><td>False</td><td></td></tr>
                                    <tr><td>Automatically bound spaces</td><td>No</td><td></td></tr>
                                    <tr><td>Keynote</td><td>eKeyNotFound</td><td></td></tr>
                                    <tr><td>Keynote value</td><td>eKeyNotFound</td><td></td></tr>
                                    <tr><td>Classifications</td><td>&lt; ArrayList &gt;</td><td></td></tr>
                                    <tr><td>Translator</td><td>(null)</td><td></td></tr>
                                    <tr><td>Localized name</td><td>Precast Column 400x400 with 2 Haunches</td><td></td></tr>
                                    <tr><td></td><td></td><td></td></tr>
                                </tbody>
                            </table>
                            <div class="scroll"><span class="thumb"></span></div>
                        </div>
                    </div>
                    <footer class="dialog-footer"><button>OK</button></footer>
                    <svg class="grip" viewBox="0 0 9 9"><path d="M6 1h2M3 4h2M6 4h2M0 7h2M3 7h2M6 7h2" stroke="#b5b5b5" stroke-width="2"/></svg>
                </section>

                <!-- Input method bar -->
                <div class="ime">
                    <svg class="ime-logo" viewBox="0 0 32 32"><path d="M2 5Q1 2 4 2L24 0Q27 0 28 3L31 26L28 29L8 31Q5 31 4 28z" fill="#f1571f"/><path d="M25 8C17 5 7 8 8 12C9 16 25 14 25 19C25 24 14 25 7 22" fill="none" stroke="#fff" stroke-width="4"/></svg>
                    <b>中</b>
                    <svg viewBox="0 0 16 16"><circle cx="5" cy="5" r="2" fill="none" stroke="currentColor" stroke-width="1.500"/><path d="M11 8H14V10L12 14H11L12 11H11z" fill="currentColor"/></svg>
                    <svg viewBox="0 0 16 16"><rect x="5" y="0" width="6" height="10" rx="3" fill="currentColor"/><path d="M2 7C2 14 14 14 14 7M8 12V15M5 15H11" fill="none" stroke="currentColor" stroke-width="1.500"/></svg>
                    <svg viewBox="0 0 16 16"><rect x="1" y="2.500" width="14" height="11" rx="1" fill="none" stroke="currentColor" stroke-width="1.500"/><path d="M3 6H13M3 8.500H13" stroke="currentColor" stroke-width="1.500" stroke-dasharray="2 1.200"/><path d="M4 11.500H12" stroke="currentColor"/></svg>
                    <svg viewBox="0 0 16 16"><defs><linearGradient id="shirt" x2="1" y2="1"><stop stop-color="#ff6b57"/><stop offset=".6" stop-color="#a77cf2"/><stop offset="1" stop-color="#5aa7ff"/></linearGradient></defs><path d="M1 4L5 3C6 5 9 5 10 3L15 4V8H12V15H4V8H1z" fill="url(#shirt)"/><circle cx="14" cy="1.500" r="2.500" fill="#ff4b2b"/></svg>
                    <svg viewBox="0 0 16 16"><path d="M8 1V5" stroke="currentColor" stroke-width="1.500"/><rect x="1.500" y="4" width="13" height="11" rx="5.500" fill="currentColor"/><path d="M0 8V12M16 8V12" stroke="currentColor" stroke-width="2"/><path d="M4 10H7M5.500 8.500V11.500M9 10H12M10.500 8.500V11.500" stroke="#fff"/></svg>
                    <svg viewBox="0 0 16 16"><path d="M2 2H7V7H2zM2 9H7V14H2zM9 9H14V14H9z" fill="currentColor"/><circle cx="11.500" cy="4.500" r="2" fill="none" stroke="currentColor" stroke-width="1.500"/></svg>
                    <svg viewBox="0 0 16 16"><use href="#i-gear"/><path d="M8 5V14" stroke="currentColor" stroke-width="2"/></svg>
                </div>
            </main>

            <footer class="status">
                <button class="menu" aria-label="菜单"><svg viewBox="0 0 16 12"><use href="#i-menu"/></svg></button>
                <button class="layout-active">模型</button>
                <button class="layout-tab">Work</button>
                <span class="slash"></span>
                <button class="plus" aria-label="新建布局"><svg viewBox="0 0 14 14"><use href="#i-plus"/></svg></button>
                <span class="slash"></span>
                <div class="status-right">
                    <div class="cell coords">41602.34, 30305.35, 0.00</div>
                    <div class="cell model">模型</div>
                    <div class="cell">
                        <button class="on"><svg viewBox="0 0 16 16"><path d="M5 0V16M10.500 0V16M0 3H16M0 8H16M0 13H16" stroke="#ddd" fill="none"/></svg></button>
                        <button class="on"><svg viewBox="0 0 16 16"><path d="M2 3H15M2 8H15M2 13H15" stroke="#ddd" stroke-width="2" stroke-dasharray="2 3"/></svg></button>
                        <i class="caret wide"></i>
                    </div>
                    <div class="cell">
                        <button class="on"><svg viewBox="0 0 16 16"><path d="M4 1V9M0 5H8" stroke="#ddd"/><path d="M6 9H16V14H6z" fill="#ddd"/></svg></button>
                        <button><svg viewBox="0 0 16 16"><path d="M1 0V15H16M1 9H7V15" fill="none" stroke="#ccc" stroke-width="1.400"/></svg></button>
                        <button class="on"><svg viewBox="0 0 16 16"><circle cx="7" cy="9" r="6" fill="none" stroke="#ddd"/><path d="M7 9L14 1M7 9H15" stroke="#ddd"/></svg></button>
                        <i class="caret wide"></i>
                    </div>
                    <div class="cell">
                        <button class="on"><svg viewBox="0 0 16 16"><path d="M13 1L1 14H16" fill="none" stroke="#ddd" stroke-width="1.400"/><circle cx="7" cy="8" r="2" fill="#ddd"/></svg></button>
                        <button class="on"><svg viewBox="0 0 16 16"><path d="M0 .5H4V4.500H0zM4 2.500H14.500V15.500H2.500V5" fill="none" stroke="#ddd"/></svg></button>
                        <i class="caret wide"></i>
                    </div>
                    <div class="cell pair">
                        <button><svg viewBox="0 0 16 16"><path d="M0 2H16M0 6H10M0 10H16M0 14H10" stroke="#ccc" stroke-width="2"/></svg></button>
                        <button><svg viewBox="0 0 16 16"><path d="M3 0V6M0 3H6M6 3H14M3 6V11" stroke="#ccc"/><path d="M6 5H15V15H6z" fill="#65c487"/></svg></button>
                    </div>
                    <div class="cell annotation">
                        <button class="on"><svg viewBox="0 0 16 16"><use href="#i-nav"/><circle cx="13" cy="4" r="2.500" fill="none" stroke="#ddd"/></svg></button>
                        <button class="on"><svg viewBox="0 0 16 16"><use href="#i-nav"/><path d="M13 0L10 5H12L11 9L15 4H13z" fill="#eee"/></svg></button>
                        <button><svg viewBox="0 0 16 16"><use href="#i-nav"/></svg></button>
                        <span>1:100</span>
                        <i class="caret wide"></i>
                    </div>
                    <div class="cell gear"><svg viewBox="0 0 16 16"><use href="#i-gear"/></svg><i class="caret wide"></i></div>
                    <div class="cell"><button><svg viewBox="0 0 14 14"><use href="#i-plus"/></svg></button></div>
                    <div class="cell detail">Medium Detail <i class="caret"></i></div>
                    <div class="cell cut"><svg viewBox="0 0 16 16"><path d="M8 0L14 3M8 0L2 3" stroke="#ddd" stroke-dasharray="1 1"/><path d="M2 11L8 8L14 11V12L8 16L2 12z" fill="#bbb"/><path d="M0 7L8 3L16 7L8 11z" fill="#6dbdf5"/></svg>1400.00</div>
                    <div class="cell elevation"><svg viewBox="0 0 16 16"><path d="M1 1H4L1 5H4M4.500 11.500V15.500H.5V11.500z" fill="none" stroke="#f2a16f"/><path d="M6 5L11 2L16 5V11L11 14L6 11zM6 5L11 7L16 5M11 7V14" fill="none" stroke="#ddd"/></svg>+0.00</div>
                    <div class="cell"><button><svg viewBox="0 0 16 16"><path d="M.5 .5H6.500V6.500H.5zM7 10L11 16H3z" fill="none" stroke="#ddd"/><circle cx="13" cy="7" r="3" fill="none" stroke="#ddd"/></svg></button></div>
                    <div class="cell toggles">
                        <button class="on"><svg viewBox="0 0 16 16"><path d="M1 4H12V15H1zM1 4L4 1H15V12L12 15M12 4L15 1" fill="none" stroke="#eee"/><path d="M2 9L6 5M2 13L10 5M5 14L11 8" stroke="#eee"/></svg></button>
                        <button class="on"><svg viewBox="0 0 16 16"><path d="M5 2H16L11 8H8L6 11H3L1 14H0L3 8z" fill="#eee"/><path d="M6 14L8 8H14L11 14" fill="none" stroke="#eee"/></svg></button>
                        <svg viewBox="0 0 16 16"><circle cx="9" cy="6" r="6" fill="#3d7fc4"/><path d="M0 9H6V15H0z" fill="#f4c04e"/><path d="M3 0V6M0 3H6" stroke="#fff"/><path d="M7 11L10 14L16 8" fill="none" stroke="#54b948" stroke-width="2.500"/></svg>
                    </div>
                    <div class="cell"><button><svg viewBox="0 0 16 16"><path d="M.5 2.500H15.500V13.500H.5z" fill="none" stroke="#ddd"/><path d="M9 7L13 4M10 4H13V7M7 9L3 12M3 9V12H6" fill="none" stroke="#ddd"/></svg></button></div>
                    <div class="cell"><button><svg viewBox="0 0 16 12"><use href="#i-menu"/></svg></button></div>
                </div>
            </footer>

            <footer class="taskbar">
                <button class="start-btn" aria-label="开始"><svg viewBox="0 0 24 24"><defs><linearGradient id="win" x2="1" y2="1"><stop stop-color="#4cc9f5"/><stop offset="1" stop-color="#0669c9"/></linearGradient></defs><path d="M0 0H11V11H0zM12 0H23V11H12zM0 12H11V23H0zM12 12H23V23H12z" fill="url(#win)"/></svg></button>
                <label class="task-search">
                    <svg viewBox="0 0 16 16"><circle cx="6.500" cy="6.500" r="5.500" fill="none" stroke="#333" stroke-width="1.600"/><path d="M10.500 10.500L15 15" stroke="#333" stroke-width="1.600"/></svg>
                    <input type="text" placeholder="搜索" aria-label="任务栏搜索">
                    <svg class="lotus" viewBox="0 0 50 24"><ellipse cx="25" cy="19" rx="24" ry="5" fill="#9fd0f2"/><path d="M30 12H48L49 21H30z" fill="#9fd0f2"/><ellipse cx="14" cy="19" rx="13" ry="4" fill="#3e8f4c"/><ellipse cx="37" cy="20" rx="10" ry="3.500" fill="#4c9a45"/><path d="M38 8V19" stroke="#5b9a56" stroke-width="1.500"/><path d="M14 19C8 19 4 16 3 11L8 12L6 6L11 9L14 3L17 9L22 6L20 12L26 11C25 16 20 19 14 19z" fill="#e58cc6"/><path d="M14 18C10 17 8 14 8 11L11 13L14 8L17 13L20 11C20 14 18 17 14 18z" fill="#f7c3e2"/><circle cx="14" cy="14" r="2" fill="#f6d66a"/><path d="M31 3L35 4L38 0L40 4L44 4C44 10 41 12 37 12C33 12 31 8 31 3z" fill="#c585d6"/><path d="M37 12L35 5L38 1L40 6z" fill="#e8a7d8"/></svg>
                </label>
                <button class="task"><svg viewBox="0 0 24 24"><path d="M5 2H13C16 2 16 5 15 8L11 17H4C0 17 0 14 1 11L3 5Q3 2 5 2z" fill="#1c88d8"/><path d="M1 12L4 5L8 8L5 17C0 17 0 15 1 12z" fill="#75c257"/><path d="M12 8H20C24 8 24 11 23 14L20 20H10z" fill="#d86bc9"/><path d="M12 8H15L11 19H8z" fill="#fff"/><rect x="5" y="16" width="18" height="7" rx="2" fill="#ffc61a"/><text x="14" y="22" text-anchor="middle" class="pre-text">PRE</text></svg></button>
                <button class="task"><svg viewBox="0 0 24 24"><path d="M0 7H18V22H0z" fill="#2b2b2b"/><path d="M6 1H24V17H6z" fill="#fafafa" opacity=".75"/></svg></button>
                <button class="task weather"><svg viewBox="0 0 24 24"><circle cx="11" cy="12" r="10" fill="#f2871d"/><circle cx="14" cy="6" r="5" fill="#fbb03c"/><path d="M9 19C7 14 12 12 14 14C16 10 20 12 20 15C24 15 23 19 20 19z" fill="#b8d7fb"/></svg><span>11°</span></button>
                <button class="task open"><svg viewBox="0 0 24 24"><path d="M0 3Q0 1 2 1H8L11 4H22Q24 4 24 6V10H0z" fill="#d99a12"/><path d="M0 6H24V20Q24 22 22 22H2Q0 22 0 20z" fill="#fccf47"/><path d="M4 22V18Q4 16 6 16H18Q20 16 20 18V22z" fill="#1178c8"/></svg></button>
                <button class="task open"><svg viewBox="0 0 24 24"><circle cx="12" cy="12" r="12" fill="#1b83cf"/><path d="M1 8C5 -3 23 -2 24 11C24 16 18 17 15 15C18 11 14 7 9 8C6 8 3 9 1 12z" fill="#3fc6a0"/><path d="M9 10C4 14 8 22 16 22C10 25 1 21 0 13C1 9 5 8 9 10z" fill="#0d55a4"/><path d="M11 11C9 17 15 20 22 17C20 21 17 22 15 22C8 22 6 15 9 11z" fill="#0d55a4"/><path d="M11 12C10 17 16 19 23 15C19 16 14 16 14 13z" fill="#f0f0f0"/></svg></button>
                <button class="task open"><svg viewBox="0 0 24 24"><ellipse cx="9" cy="9" rx="9" ry="7.500" fill="#3ddb78"/><path d="M3 14L3 19L8 15z" fill="#3ddb78"/><ellipse cx="17" cy="15" rx="7" ry="5.500" fill="#e3e3e3"/><circle cx="6" cy="7" r="1.200" fill="#17793a"/><circle cx="12" cy="7" r="1.200" fill="#17793a"/><circle cx="15" cy="13" r="1" fill="#888"/><circle cx="19" cy="13" r="1" fill="#888"/></svg></button>
                <button class="task"><svg viewBox="0 0 24 24"><path d="M17 0L24 3V21L17 24L5 14L2 17L0 16V8L2 7L5 10z" fill="#8661c5"/><path d="M17 7L10 12L17 17z" fill="#efefef"/><path d="M17 0L24 3V21L17 24z" fill="#a684e0"/><path d="M2 9L4 12L2 15z" fill="#efefef"/></svg></button>
                <button class="task open"><svg viewBox="0 0 24 24"><rect x="1" y="1" width="22" height="22" rx="2" fill="#249ee4"/><path d="M1 3Q1 1 3 1H21Q23 1 23 3V7H1z" fill="#0b61ad"/><path d="M6 0V4M18 0V4" stroke="#63d3f7" stroke-width="2"/><path d="M9 11H20M5 15H20M5 19H16" stroke="#fff" stroke-width="2" stroke-dasharray="2 2"/></svg></button>
                <button class="task open"><svg viewBox="0 0 24 24"><path d="M4 8H13V22H4z" fill="#fff" stroke="#777"/><path d="M6 11H11M6 14H11M6 17H11" stroke="#777"/><path d="M11 6C11 0 20 0 19 6C19 9 15 9 15 13" fill="none" stroke="#111" stroke-width="5"/><path d="M11 6C11 0 20 0 19 6C19 9 15 9 15 13" fill="none" stroke="#ffe600" stroke-width="3"/><circle cx="15" cy="17" r="2" fill="#ffe600" stroke="#111"/></svg></button>
                <button class="task current"><svg viewBox="0 0 24 24"><path d="M2 2Q2 0 4 0H21V2L23 4V24H4L2 20z" fill="#e51050"/><path d="M1 3L4 1V24L1 20z" fill="#f2557e"/><path d="M4 17H23V24H4z" fill="#7a0b2c"/><text x="13" y="14" text-anchor="middle" class="logo-a">A</text><text x="13" y="23" text-anchor="middle" class="logo-arc">ARC</text></svg></button>
                <div class="tray">
                    <svg class="chevron" viewBox="0 0 10 10"><path d="M0 7L5 2L10 7" fill="none" stroke="#222" stroke-width="1.300"/></svg>
                    <svg viewBox="0 0 16 16"><ellipse cx="6" cy="6" rx="6" ry="5" fill="#2ebd5f"/><path d="M2 9L2 13L6 10z" fill="#2ebd5f"/><ellipse cx="12" cy="10" rx="4.500" ry="3.500" fill="#ddd"/></svg>
                    <svg viewBox="0 0 16 16"><path d="M12 5A5.500 5.500 0 1 0 8 12.500" fill="none" stroke="#2a8df0" stroke-width="2.500"/><circle cx="13" cy="8" r="2" fill="#6bc43c"/><circle cx="10" cy="11" r="2" fill="#1fa3ff"/><circle cx="13.500" cy="12" r="2" fill="#fb9a2c"/></svg>
                    <svg viewBox="0 0 16 16"><path d="M4 13C0 13 0 8 3 8C4 3 11 3 12 7C16 7 16 13 12 13z" fill="#aaa" stroke="#222" stroke-width="1.300"/><path d="M1 3L15 14" stroke="#222" stroke-width="1.500"/></svg>
                    <svg viewBox="0 0 16 16"><path d="M10 2H1V12H14V9M4 15H11M7 12V15M11.500 .5H15.500V6H11.500zM13.500 6V9" fill="none" stroke="#222" stroke-width="1.200"/></svg>
                    <svg viewBox="0 0 16 16"><path d="M1 6H4L8 3V13L4 10H1z" fill="none" stroke="#222" stroke-width="1.200"/><path d="M10 6Q11.500 8 10 10" fill="none" stroke="#222"/><path d="M12 4Q15 8 12 12M14 2Q18 8 14 14" fill="none" stroke="#bbb"/></svg>
                    <div class="clock"><span>10:46</span><span>2024/3/25</span></div>
                    <svg viewBox="0 0 16 16"><path d="M2 12V7C2 1 12 1 12 7V12L14 13H0z" fill="#222"/><path d="M5 15H10" stroke="#222" stroke-width="2"/><path d="M5 6H9L5 10H9" fill="none" stroke="#fff"/><path d="M11 1H15L11 5H15" fill="none" stroke="#222"/></svg>
                </div>
            </footer>
        </div>
    </div>
</body>
</html>
```

FILE: styles.css
```
/* Base */
* {
    margin: 0;
    padding: 0;
    box-sizing: border-box;
}

body {
    font-family: "Open Sans", "Noto Sans CJK SC", sans-serif;
    font-size: 12px;
    line-height: 16px;
    color: #e4e6e9;
    overflow: hidden;
}

button, input, select {
    font: inherit;
    color: inherit;
    background: none;
    border: 0;
    border-radius: 0;
    outline: 0;
}

button {
    white-space: nowrap;
}

svg {
    display: block;
    flex: none;
    width: 16px;
    height: 16px;
}

.sprite {
    position: absolute;
    width: 0;
    height: 0;
}

.desktop {
    display: flex;
    height: 100vh;
}

.behind {
    width: 8px;
    background: linear-gradient(#f3f3f3 0 1028px, #e1ecf6 1028px);
    box-shadow: inset 2px 0 #cfcfcf;
}

.behind-red {
    display: block;
    width: 6px;
    height: 28px;
    margin-top: 52px;
    background: #c42b1c;
}

.app {
    flex: 1;
    min-width: 0;
    display: flex;
    flex-direction: column;
    background: #222933;
}

/* Small triangles */
.caret {
    flex: none;
    display: inline-block;
    width: 12px;
    height: 4px;
    background: linear-gradient(#ccc, #ccc) center / 8px 4px no-repeat;
    clip-path: polygon(2px 0, 10px 0, 6px 4px);
}

.caret.wide {
    width: 18px;
    clip-path: polygon(5px 0, 13px 0, 9px 4px);
}

.caret.dim {
    opacity: .6;
}

.caret.side {
    width: 4px;
    height: 8px;
    margin-right: 7px;
    background: #ccc;
    clip-path: polygon(0 0, 4px 4px, 0 8px);
}

.caret.up {
    clip-path: polygon(2px 4px, 6px 0, 10px 4px);
}

/* Drop-downs */
.combo {
    position: relative;
    display: flex;
    align-items: center;
    background: #4d5869;
    border: 1px solid #2b313c;
}

.combo::after {
    content: "";
    position: absolute;
    right: 3px;
    width: 8px;
    height: 4px;
    background: #d0d0d0;
    clip-path: polygon(0 0, 8px 0, 4px 4px);
}

.combo select, .combo input {
    appearance: none;
    width: 100%;
    height: 100%;
    padding-left: 3px;
    opacity: 1;
}

/* Title bar */
.titlebar {
    display: flex;
    align-items: flex-start;
    height: 32px;
}

.title-left, .title-right {
    display: flex;
    align-items: center;
    height: 28px;
}

.title-left {
    padding-left: 15px;
}

.app-logo {
    display: flex;
    align-items: center;
    height: 18px;
    background: #7a0b2c;
    border-left: 3px solid #f2557e;
    font-family: Roboto, sans-serif;
    font-weight: 700;
}

.app-logo b {
    width: 17px;
    background: #e51050;
    font-size: 14px;
    line-height: 18px;
}

.app-logo span {
    width: 20px;
    font-size: 8px;
}

.tool {
    display: flex;
    justify-content: center;
    width: 24px;
}

.rule {
    width: 1px;
    height: 20px;
    margin: 0 5px 0 7px;
    background: #4a5260;
}

.workspace {
    width: 178px;
    height: 20px;
    padding-left: 4px;
    background: #3b4453;
    border: 0;
}

.share {
    display: flex;
    align-items: center;
    gap: 4px;
    color: #8ccdfb;
}

.title-text {
    flex: 1;
    display: flex;
    justify-content: center;
    gap: 20px;
    padding-left: 4px;
    line-height: 28px;
    white-space: nowrap;
}

.search-box {
    width: 178px;
    height: 20px;
    padding-left: 3px;
    background: #464f61;
}

::placeholder {
    color: #c3c7cd;
    font-style: italic;
    opacity: 1;
}

.account {
    display: flex;
    align-items: center;
    gap: 5px;
    margin: 0 18px 0 4px;
}

.cart {
    margin-left: 4px;
}

.help {
    width: 16px;
    height: 16px;
    margin: 0 4px;
    border-radius: 8px;
    background: #ddd;
    color: #222933;
    font-weight: 700;
}

.window-controls {
    display: flex;
    margin-left: 60px;
}

.window-controls button {
    display: flex;
    justify-content: center;
    width: 46px;
}

.window-controls svg {
    width: 10px;
    height: 10px;
}

/* Ribbon */
.ribbon-tabs {
    display: flex;
    height: 20px;
    padding-left: 3px;
    color: #c3c7cc;
}

.ribbon-tabs button {
    padding: 1px 10px 0;
    line-height: 20px;
}

.ribbon-tabs .latin {
    padding: 1px 12px 0 11px;
}

.ribbon-tabs .active {
    background: #3b4453;
    color: #fff;
}

.ribbon-tabs .ribbon-toggle {
    display: flex;
    align-items: center;
    gap: 2px;
    padding: 1px 20px 0;
}

.ribbon-toggle span {
    width: 15px;
    height: 8px;
    background: #b9bcc0;
}

.ribbon {
    display: flex;
    height: 99px;
    background: #3b4453;
}

.panel {
    display: flex;
    flex-direction: column;
    flex: none;
    padding-top: 6px;
    border-right: 1px solid #2a303b;
}

.panel-recorder { width: 207px; }
.panel-cad { width: 146px; }
.panel-project { width: 122px; }
.panel-style { width: 127px; }
.panel-apps { width: 236px; }
.panel-custom { width: 85px; }
.panel-purge { width: 186px; }
.panel-perf { width: 46px; border: 0; }

.panel-body {
    flex: 1;
    display: flex;
    padding-left: 2px;
    color: #7d838c;
}

.panel-title {
    height: 18px;
    text-align: center;
    color: #eceef0;
}

.panel-title .caret {
    vertical-align: middle;
}

.big {
    display: flex;
    flex-direction: column;
    align-items: center;
    padding: 2px 3px 0;
    color: #7d838c;
    white-space: normal;
    word-break: keep-all;
}

.big svg {
    width: 32px;
    height: 32px;
    margin-bottom: 4px;
}

.panel-recorder .big {
    padding-left: 5px;
}

.cui-text {
    font: 12px Roboto, sans-serif;
    fill: #aab0b8;
}

.small {
    display: flex;
    align-items: center;
    gap: 5px;
    height: 24px;
    color: #747b86;
}

.small-stack {
    margin-left: 5px;
}

.icon-stack {
    padding: 3px 9px 0 5px;
}

.icon-stack svg {
    margin-bottom: 8px;
}

.play-group {
    padding: 0 0 0 6px;
    border-left: 1px solid #2a303b;
}

.play-row {
    display: flex;
    align-items: center;
    gap: 12px;
    padding-left: 2px;
}

.macro {
    width: 124px;
    height: 23px;
    background: #454e61;
}

/* Drawing tabs */
.file-tabs {
    display: flex;
    align-items: center;
    height: 31px;
    border-bottom: 4px solid #3b4453;
}

.menu {
    margin-left: 16px;
}

.menu svg {
    height: 12px;
}

.start {
    padding-top: 2px;
}

.slash {
    width: 1px;
    height: 16px;
    background: #4f5662;
    transform: skewX(-20deg);
}

.file-tabs .slash {
    margin: 0 12px 0 13px;
}

.file-active {
    display: flex;
    align-items: center;
    gap: 11px;
    height: 24px;
    margin: 3px 8px 0;
    padding: 0 16px;
    background: #3b4453;
    clip-path: polygon(8px 0, 100% 0, calc(100% - 8px) 100%, 0 100%);
    color: #fff;
    font-weight: 700;
}

.file-active svg {
    width: 8px;
    height: 8px;
}

.plus svg {
    width: 14px;
    height: 14px;
}

/* Drawing canvas */
.canvas {
    position: relative;
    flex: 1;
    min-height: 0;
    overflow: hidden;
    background: #21272f;
}

.scene {
    position: absolute;
    width: 1920px;
    height: 817px;
}

.axis-text {
    font: 18px Lato, sans-serif;
    font-weight: 300;
    fill: #dcdcdc;
}

.view-label {
    position: absolute;
    top: 6px;
    left: 4px;
}

.doc-controls {
    position: absolute;
    top: 10px;
    right: 11px;
    display: flex;
    gap: 10px;
}

.doc-controls svg {
    width: 10px;
    height: 10px;
}

.viewcube {
    position: absolute;
    top: 63px;
    right: 18px;
    display: flex;
    flex-direction: column;
    align-items: center;
    gap: 10px;
}

.viewcube svg {
    width: 130px;
    height: 120px;
}

.compass-text {
    font-size: 12px;
    fill: #9fa2a6;
}

.compass-text .near {
    font-size: 18px;
}

.cube-text {
    font-size: 16px;
    fill: #555b62;
}

.cube-text .face {
    font-size: 19px;
}

.wcs {
    width: 48px;
    height: 18px;
    border-radius: 4px;
    background: #8f939f;
    color: #4e525c;
    line-height: 18px;
}

.wcs .caret {
    opacity: .6;
}

/* Palettes */
.palette {
    position: absolute;
    display: flex;
    background: #2e3440;
}

.palette-bar {
    display: flex;
    flex-direction: column;
    align-items: center;
    flex: 0 0 24px;
    gap: 9px;
    padding-top: 5px;
    color: #c6c9cd;
}

.palette-bar svg {
    width: 10px;
    height: 10px;
}

.palette-bar .palette-icon {
    width: 16px;
    height: 16px;
}

.vertical {
    writing-mode: vertical-rl;
    text-orientation: sideways;
    transform: rotate(180deg);
}

.palette-bar .vertical {
    margin-top: auto;
}

.palette-body {
    flex: 1;
    min-width: 0;
    display: flex;
    margin: 4px 0 2px;
    padding: 0 0 2px 5px;
    border-radius: 3px;
    background: #3b4453;
    overflow: hidden;
}

.track {
    flex: none;
    width: 5px;
    border-radius: 3px;
    background: #2b313c;
}

.properties {
    top: 13px;
    left: 30px;
    width: 411px;
    height: 639px;
}

.properties .track {
    margin: 39px 0 13px;
}

.props {
    flex: 1;
    min-width: 0;
    padding-left: 9px;
    overflow: hidden;
}

.props-head {
    display: flex;
    align-items: center;
    gap: 8px;
    padding: 12px 0 3px;
}

.selection {
    width: 261px;
    height: 24px;
}

.props h3 {
    height: 22px;
    padding-left: 7px;
    background: #2e3440;
    color: #fff;
    font-size: 12px;
    line-height: 22px;
}

.props table {
    width: 100%;
    padding-left: 17px;
    margin-bottom: 3px;
    border-spacing: 0;
    table-layout: fixed;
}

.props th, .props td {
    height: 21px;
    border-left: 1px solid #2b313c;
    border-bottom: 1px solid #2b313c;
    line-height: 16px;
    text-align: left;
    white-space: nowrap;
}

.props th {
    width: 174px;
    padding: 0 0 2px 6px;
    color: #cdd0d4;
    font-weight: 400;
}

.props td {
    padding: 2px 0 0 2px;
}

.props .off {
    color: #868c96;
}

.swatch {
    display: inline-block;
    width: 14px;
    height: 14px;
    margin: -2px 7px 0 1px;
    background: #fff;
    vertical-align: middle;
}

.line {
    display: inline-block;
    width: 65px;
    height: 1px;
    margin: 0 4px 0 1px;
    background: #fff;
    vertical-align: middle;
}

.tools {
    top: 3px;
    left: 459px;
    width: 240px;
    height: 200px;
}

.tool-item {
    flex: 1;
    display: flex;
    align-items: flex-start;
    gap: 4px;
    padding: 8px 4px 0 13px;
}

.tool-item span {
    padding-top: 2px;
}

.tools .track {
    margin: 5px 0;
}

.tool-item svg {
    width: 20px;
    height: 24px;
}

.tool-item .cross {
    width: 12px;
    height: 12px;
    margin: 5px 0 0 auto;
}

/* Blocks palette */
.blocks {
    top: 257px;
    right: 3px;
    width: 423px;
    height: 559px;
}

.block-tabs {
    display: flex;
    flex-direction: column;
    flex: 0 0 24px;
    margin: 3px 0 29px;
}

.block-tabs button {
    flex: 1;
    display: flex;
    align-items: center;
    justify-content: center;
    border: 1px solid #222933;
    border-right-color: #2b313c;
    color: #aeb3ba;
}

.block-tabs .active {
    background: #3b4453;
    border-color: #3b4453;
    color: #fff;
}

.block-body {
    flex: 1;
    min-width: 0;
    display: flex;
    flex-direction: column;
    margin: 3px 0 5px;
    padding: 14px 12px 13px 12px;
    background: #3b4453;
}

.filter-row {
    display: flex;
    align-items: center;
    gap: 12px;
}

.filter {
    width: 276px;
    height: 21px;
}

.filter-row svg:nth-of-type(2) {
    width: 12px;
    height: 12px;
}

.block-body h4 {
    margin: 5px 0 3px;
    font-size: 12px;
    font-weight: 500;
}

.block-list {
    flex: 1;
    display: flex;
    align-items: flex-start;
    gap: 2px;
    padding: 1px;
    border: 1px solid #2e3440;
}

.block-list figure {
    width: 78px;
    height: 90px;
    text-align: center;
    color: #fff;
}

.block-list figure > svg {
    width: 78px;
    height: 72px;
    margin-bottom: -3px;
}

.block-list svg svg {
    width: 61px;
    height: 72px;
}

.selected {
    background: #7486a5;
}

.cad-text {
    font: 23px Lato, sans-serif;
    font-weight: 300;
    fill: #fff;
}

.cad-small {
    font-size: 14px;
}

.options-head {
    display: flex;
    align-items: center;
    gap: 8px;
    height: 24px;
    padding: 0 7px 0 6px;
    background: #222933;
    font-weight: 500;
}

.options-head svg {
    margin-left: auto;
}

.options {
    display: flex;
    flex-direction: column;
    gap: 1px;
    height: 155px;
    padding: 4px 6px;
    border: 1px solid #222933;
    border-top: 0;
}

.options label, .option-row {
    display: flex;
    align-items: center;
    height: 24px;
}

.options svg {
    margin: 0 8px 0 3px;
}

.options input[type="checkbox"] {
    appearance: none;
    width: 14px;
    height: 14px;
    background: #8798b8;
    border: 1px solid #2b313c;
}

.options input[type="checkbox"]:checked::after {
    content: "";
    display: block;
    width: 9px;
    height: 5px;
    margin: 1px;
    border: solid #222933;
    border-width: 0 0 2px 2px;
    transform: rotate(-45deg);
}

.scale {
    width: 111px;
    height: 21px;
    margin-right: 23px;
    background: #444d5f;
    color: #868c96;
}

.scale::after, .macro::after {
    opacity: .5;
}

.options .number {
    width: 42px;
    height: 18px;
    padding-left: 3px;
    background: #4d5869;
    border: 1px solid #2b313c;
}

.blocks .vertical + .palette-icon {
    margin-bottom: 4px;
}

/* Command line */
.command {
    position: absolute;
    left: 393px;
    right: 394px;
    bottom: 1px;
    display: flex;
    align-items: center;
    gap: 7px;
    height: 26px;
    padding-left: 4px;
    background: #2e3440;
}

.command svg {
    width: 10px;
    height: 10px;
}

.command svg:first-child {
    width: 6px;
    height: 18px;
}

.command .wrench {
    margin-left: 4px;
}

.command-input {
    flex: 1;
    display: flex;
    align-items: center;
    justify-content: flex-end;
    height: 26px;
    margin-left: 20px;
    background: #fff;
}

.command-input .caret {
    background: #555;
}

/* Dialogs */
.dialog {
    position: absolute;
    display: flex;
    flex-direction: column;
    width: 1014px;
    height: 664px;
    border-radius: 8px;
    background: #f0f0f0;
    color: #000;
    overflow: hidden;
}

.selected-entities {
    top: 30px;
    left: 367px;
    box-shadow: 0 8px 24px rgba(0, 0, 0, .4);
}

.snoop {
    top: 154px;
    left: 436px;
    box-shadow: 0 0 0 1px rgba(80, 85, 95, .6), 0 10px 40px rgba(0, 0, 0, .5);
}

.dialog-title {
    display: flex;
    align-items: center;
    gap: 7px;
    height: 30px;
    padding: 0 10px 0 9px;
    background: #f3f3f3;
    color: #8d8d8d;
}

.snoop .dialog-title {
    background: #eef4f9;
    color: #111;
}

.dialog-title h2 {
    flex: 1;
    font-size: 12px;
    font-weight: 400;
}

.dialog-title button svg {
    width: 10px;
    height: 10px;
}

.form-icon {
    width: 14px;
    height: 14px;
}

.mini-logo {
    width: 14px;
    height: 15px;
    border-radius: 2px;
    background: #e51050;
    border-bottom: 5px solid #7a0b2c;
    border-left: 2px solid #f2557e;
    color: #fff;
    font-size: 9px;
    line-height: 10px;
    text-align: center;
}

.dialog-tools {
    display: flex;
    align-items: center;
    gap: 7px;
    height: 28px;
    padding: 0 0 4px 12px;
    background: radial-gradient(circle, #bbb 1px, transparent 1px) 3px 2px / 3px 4px repeat-y, linear-gradient(#fff, #f0f0f0);
}

.dialog-body {
    flex: 1;
    min-height: 0;
    display: flex;
    gap: 20px;
    padding: 19px 16px 0 26px;
    margin-bottom: 56px;
    font-family: "Liberation Mono", "Noto Sans CJK SC", monospace;
    font-size: 10px;
}

.tree, .list {
    border: 1px solid #828790;
    background: #fff;
}

.tree {
    flex: 0 0 307px;
}

.node {
    position: relative;
    width: 178px;
    height: 14px;
    margin: 1px 0 0 23px;
    padding: 1px 0 0 2px;
    background: #f0f0f0;
    line-height: 14px;
    white-space: pre;
}

.node::before {
    content: "";
    position: absolute;
    top: 8px;
    left: -11px;
    width: 10px;
    border-top: 1px dotted #808080;
}

.current {
    background: #0078d7;
    color: #fff;
    outline: 1px dotted #e8761a;
    outline-offset: -1px;
}

.list {
    flex: 1;
    min-width: 0;
    display: flex;
    overflow: hidden;
}

.list table {
    flex: 1;
    align-self: flex-start;
    table-layout: fixed;
    border-spacing: 0;
    padding-left: 1px;
    margin-right: 1px;
}

.c1 { width: 200px; }
.c2 { width: 300px; }

.list th {
    height: 25px;
    padding: 3px 0 0 6px;
    border-right: 1px solid #e5e5e5;
    font-weight: 400;
    text-align: left;
}

.list td {
    height: 16px;
    padding: 2px 0 0 6px;
    border-right: 1px solid #f0f0f0;
    border-bottom: 1px solid #f0f0f0;
    line-height: 13px;
    white-space: pre;
    overflow: hidden;
}

.list th:last-child, .list td:last-child {
    border-right: 0;
}

.list .cjk {
    font-size: 12px;
}

.strong {
    font-size: 12px;
    font-weight: 700;
}

.group td:not(:last-child) {
    background: #add8e6;
}

.group td:first-child {
    border-left: 3px solid #fff;
    padding-left: 3px;
}

.scroll {
    flex: 0 0 17px;
    padding: 86px 0 0 8px;
    background: #f0f0f0;
}

.thumb {
    display: block;
    width: 2px;
    height: 424px;
    border-radius: 1px;
    background: #858585;
}

.dialog-footer {
    position: absolute;
    bottom: 9px;
    width: 100%;
    padding-left: 2px;
    text-align: center;
}

.dialog-footer button {
    width: 94px;
    height: 26px;
    border: 1px solid #0078d4;
    border-radius: 4px;
    background: #fdfdfd;
    font: 10px "Liberation Mono", monospace;
}

.grip {
    position: absolute;
    right: 2px;
    bottom: 2px;
    width: 9px;
    height: 9px;
}

/* Input method */
.ime {
    position: absolute;
    top: 694px;
    right: 0;
    display: flex;
    align-items: center;
    gap: 8px;
    width: 212px;
    height: 26px;
    padding: 0 5px 0 23px;
    background: #fff;
    color: #0a6ed1;
}

.ime b {
    width: 16px;
    font-size: 15px;
}

.ime-logo {
    position: absolute;
    top: -4px;
    left: -14px;
    width: 32px;
    height: 31px;
}

/* Status bar */
.status {
    display: flex;
    align-items: center;
    height: 33px;
    border-top: 4px solid #3b4453;
    background: #222933;
}

.status .menu {
    padding-bottom: 4px;
}

.layout-active {
    align-self: flex-start;
    width: 58px;
    height: 24px;
    margin: 0 7px 0 9px;
    background: #3b4453;
    clip-path: polygon(9px 0, 100% 0, calc(100% - 9px) 100%, 0 100%);
    color: #fff;
    font-weight: 700;
}

.layout-tab {
    padding-bottom: 4px;
}

.status .plus {
    padding-bottom: 3px;
}

.status .slash {
    margin: 0 13px;
}

.status-right {
    display: flex;
    gap: 3px;
    margin-left: auto;
    padding: 0 2px 2px 0;
    white-space: nowrap;
}

.cell {
    display: flex;
    align-items: center;
    justify-content: center;
    gap: 2px;
    height: 24px;
    background: #2e3542;
}

.cell button {
    display: flex;
    align-items: center;
    justify-content: center;
    width: 22px;
    height: 22px;
}

.cell .on {
    background: #4e78a8;
}

.cell .caret.wide {
    width: 16px;
    clip-path: polygon(4px 0, 12px 0, 8px 4px);
}

.coords { width: 150px; }
.model { width: 27px; }
.pair { width: 49px; }
.annotation { width: 122px; }
.gear { width: 40px; }
.detail { width: 95px; }
.cut { width: 79px; gap: 10px; }
.elevation { width: 62px; gap: 8px; }
.toggles { width: 76px; gap: 4px; }

/* Taskbar */
.taskbar {
    display: flex;
    align-items: center;
    height: 48px;
    padding-left: 21px;
    background: #f0f0f0;
    border-top: 1px solid #c4c6c9;
    color: #222;
}

.start-btn svg {
    width: 24px;
    height: 24px;
}

.task-search {
    display: flex;
    align-items: center;
    gap: 8px;
    width: 219px;
    height: 32px;
    margin: 0 0 0 12px;
    padding: 0 2px 0 11px;
    border: 1px solid #d8d8d8;
    border-radius: 16px;
    background: #fbfbfb;
    font-size: 14px;
}

.task-search input {
    flex: 1;
    min-width: 0;
}

.task-search ::placeholder {
    color: #555;
    font-style: normal;
}

.lotus {
    width: 50px;
    height: 24px;
}

.task {
    position: relative;
    display: flex;
    align-items: center;
    justify-content: center;
    width: 38px;
    height: 38px;
    margin-left: 6px;
    border-radius: 4px;
}

.task svg {
    width: 24px;
    height: 24px;
}

.task.open::after, .task.current::after {
    content: "";
    position: absolute;
    bottom: 0;
    width: 6px;
    height: 3px;
    border-radius: 2px;
    background: #8a8a8a;
}

.task.current {
    background: #fafafa;
    box-shadow: 0 0 1px #aaa;
}

.task.current::after {
    width: 16px;
    background: #0078d4;
}

.weather span {
    position: absolute;
    top: 0;
    right: -2px;
    padding: 0 3px;
    border-radius: 8px;
    background: #fafafa;
    font-size: 11px;
}

.pre-text {
    font: 700 6px Roboto, sans-serif;
}

.logo-a {
    font: 700 13px Roboto, sans-serif;
    fill: #fff;
}

.logo-arc {
    font: 700 6px Roboto, sans-serif;
    fill: #fff;
}

.tray {
    display: flex;
    align-items: center;
    gap: 16px;
    margin-left: auto;
    padding-right: 19px;
}

.tray .chevron {
    width: 10px;
    height: 10px;
    margin-right: 2px;
}

.tray svg:nth-of-type(6) {
    margin-left: -8px;
}

.clock {
    display: flex;
    flex-direction: column;
    width: 58px;
    text-align: right;
}

.tray svg:last-child {
    margin-left: -8px;
}
```
